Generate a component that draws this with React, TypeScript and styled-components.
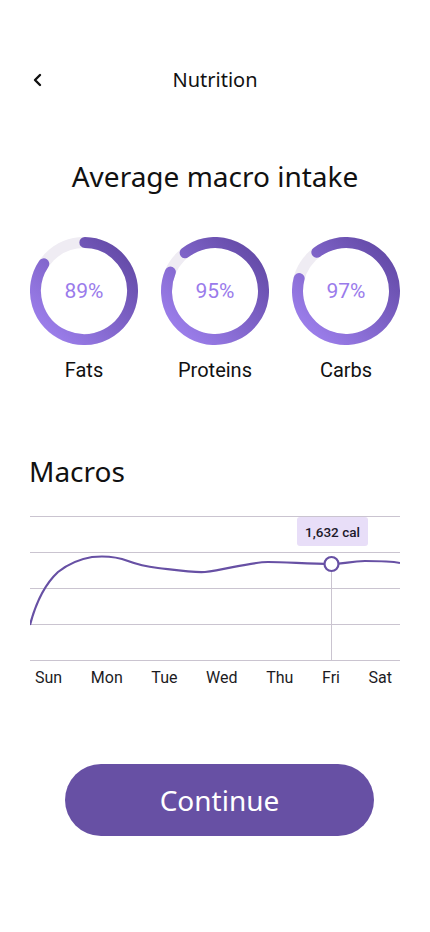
import React from "react";
import styled, { createGlobalStyle } from "styled-components";

const Global = createGlobalStyle`
  html, body { margin: 0; padding: 0; background: #ffffff; }
  body { font-family: "Noto Sans", "Open Sans", sans-serif; color: #111111; }
`;

const Page = styled.div`
  width: 430px;
  min-height: 932px;
  display: flex;
  flex-direction: column;
  background: #fff;
`;

const Header = styled.header`
  margin-top: 60px;
  height: 40px;
  display: grid;
  grid-template-columns: 1fr auto 1fr;
  align-items: center;
`;

const BackButton = styled.button`
  justify-self: start;
  margin-left: 30px;
  width: 16px;
  height: 20px;
  padding: 0;
  border: none;
  background: none;
  display: flex;
  align-items: center;
  justify-content: center;
`;

const HeaderTitle = styled.h1`
  margin: 0;
  font-family: "Noto Sans", sans-serif;
  font-weight: 400;
  font-size: 20px;
  line-height: 40px;
  color: #111111;
`;

const SectionTitle = styled.h2<{ $align?: "center" | "left" }>`
  margin: 0;
  font-family: "Noto Sans", sans-serif;
  font-weight: 400;
  font-size: 28px;
  line-height: 36px;
  color: #111111;
  text-align: ${(p) => p.$align ?? "center"};
`;

const IntakeTitle = styled(SectionTitle)`
  margin-top: 58px;
`;

const RingRow = styled.div`
  margin-top: 43px;
  display: grid;
  grid-template-columns: repeat(3, 108px);
  justify-content: center;
  column-gap: 23px;
`;

const RingItem = styled.div`
  display: flex;
  flex-direction: column;
  align-items: center;
  gap: 13px;
`;

const RingBox = styled.div`
  position: relative;
  width: 108px;
  height: 108px;
`;

const RingValue = styled.span`
  position: absolute;
  inset: 0;
  display: flex;
  align-items: center;
  justify-content: center;
  font-family: Roboto, sans-serif;
  font-size: 21px;
  color: #9a7beb;
`;

const RingLabel = styled.span`
  font-family: Roboto, sans-serif;
  font-size: 20px;
  line-height: 24px;
  color: #111111;
  white-space: nowrap;
`;

const MacrosSection = styled.section`
  margin-top: 71px;
  padding: 0 30px 0 29px;
  display: flex;
  flex-direction: column;
`;

const ChartArea = styled.div`
  position: relative;
  margin-top: 21px;
  margin-left: 1px;
  width: 370px;
  height: 152px;
`;

const Tooltip = styled.div`
  position: absolute;
  left: 267px;
  top: 7px;
  width: 71px;
  height: 29px;
  border-radius: 3px;
  background: #e8def8;
  display: flex;
  align-items: center;
  justify-content: center;
  font-family: Roboto, sans-serif;
  font-weight: 500;
  font-size: 13.5px;
  color: #1d192b;
`;

const DayRow = styled.div`
  margin-top: 6px;
  padding: 0 8px 0 6px;
  display: flex;
  justify-content: space-between;
`;

const Day = styled.span`
  font-family: Roboto, sans-serif;
  font-size: 16px;
  line-height: 20px;
  color: #1c1b1f;
`;

const ContinueButton = styled.button`
  margin: 76px 0 0 65px;
  width: 309px;
  height: 72px;
  border: none;
  border-radius: 36px;
  background: #6750a4;
  color: #ffffff;
  font-family: "Noto Sans", sans-serif;
  font-size: 28px;
  font-weight: 400;
  display: flex;
  align-items: center;
  justify-content: center;
  padding: 0;
`;

const R = 48.5;
const C = 54;

function pt(a: number) {
  const rad = (a * Math.PI) / 180;
  return [C + R * Math.sin(rad), C - R * Math.cos(rad)];
}

function arcPath(s: number, e: number) {
  let sweep = e - s;
  while (sweep < 0) sweep += 360;
  const [x1, y1] = pt(s);
  const [x2, y2] = pt(e);
  const large = sweep > 180 ? 1 : 0;
  return `M ${x1.toFixed(2)} ${y1.toFixed(2)} A ${R} ${R} 0 ${large} 1 ${x2.toFixed(2)} ${y2.toFixed(2)}`;
}

function Ring({ id, value, start, end }: { id: string; value: string; start: number; end: number }) {
  return (
    <RingBox>
      <svg width="108" height="108" viewBox="0 0 108 108">
        <defs>
          <linearGradient id={id} gradientUnits="userSpaceOnUse" x1="104" y1="4" x2="4" y2="104">
            <stop offset="0" stopColor="#5d449f" />
            <stop offset="1" stopColor="#a385f4" />
          </linearGradient>
        </defs>
        <circle cx={C} cy={C} r={R} fill="none" stroke="#efecf3" strokeWidth="11" />
        <path d={arcPath(start, end)} fill="none" stroke={`url(#${id})`} strokeWidth="11" strokeLinecap="round" />
      </svg>
      <RingValue>{value}</RingValue>
    </RingBox>
  );
}

const rings = [
  { id: "g1", value: "89%", label: "Fats", start: 1, end: 304 },
  { id: "g2", value: "95%", label: "Proteins", start: -38, end: 293 },
  { id: "g3", value: "97%", label: "Carbs", start: -37, end: 285 },
];

const days = ["Sun", "Mon", "Tue", "Wed", "Thu", "Fri", "Sat"];
const gridY = [6, 42, 78, 114, 150];

export default function App() {
  return (
    <Page>
      <Global />
      <Header>
        <BackButton aria-label="Back">
          <svg width="10" height="14" viewBox="0 0 10 14">
            <path d="M7 2 L2 7 L7 12" fill="none" stroke="#111111" strokeWidth="2.4" strokeLinecap="round" strokeLinejoin="round" />
          </svg>
        </BackButton>
        <HeaderTitle>Nutrition</HeaderTitle>
        <span />
      </Header>

      <IntakeTitle>Average macro intake</IntakeTitle>

      <RingRow>
        {rings.map((r) => (
          <RingItem key={r.id}>
            <Ring id={r.id} value={r.value} start={r.start} end={r.end} />
            <RingLabel>{r.label}</RingLabel>
          </RingItem>
        ))}
      </RingRow>

      <MacrosSection>
        <SectionTitle $align="left">Macros</SectionTitle>
        <ChartArea>
          <svg width="370" height="152" viewBox="0 0 370 152">
            {gridY.map((y) => (
              <line key={y} x1="0" x2="370" y1={y + 0.5} y2={y + 0.5} stroke="#cac4d0" strokeWidth="1" />
            ))}
            <line x1="301.5" x2="301.5" y1="54" y2="150" stroke="#cac4d0" strokeWidth="1" />
            <path
              d="M0,115 C6,92 14,75 28,62 C38,54 50,49 62,47 C72,46 85,46 98,51 C106,54 112,56 128,58 C145,60 165,63 175,62 C195,60 220,52 238,52 C255,52 280,54 301,54 C315,54 320,51 335,51 C350,51 360,51 370,53"
              fill="none"
              stroke="#6750a4"
              strokeWidth="2.2"
            />
            <circle cx="301.5" cy="54" r="7" fill="#ffffff" stroke="#6750a4" strokeWidth="2.2" />
          </svg>
          <Tooltip>1,632 cal</Tooltip>
        </ChartArea>
        <DayRow>
          {days.map((d) => (
            <Day key={d}>{d}</Day>
          ))}
        </DayRow>
      </MacrosSection>

      <ContinueButton>Continue</ContinueButton>
    </Page>
  );
}
